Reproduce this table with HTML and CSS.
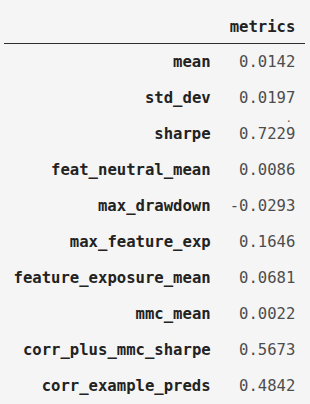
FILE: index.html
```html
<!DOCTYPE html>
<html>
<head>
<meta charset="utf-8">
<link rel="stylesheet" href="styles.css">
</head>
<body>
<table class="df">
  <thead>
    <tr><th class="blank"></th><th class="col">metrics</th></tr>
  </thead>
  <tbody>
    <tr><th>mean</th><td>0.0142</td></tr>
    <tr><th>std_dev</th><td class="dotted">0.0197<span class="dot">.</span></td></tr>
    <tr><th>sharpe</th><td>0.7229</td></tr>
    <tr><th>feat_neutral_mean</th><td>0.0086</td></tr>
    <tr><th>max_drawdown</th><td>-0.0293</td></tr>
    <tr><th>max_feature_exp</th><td>0.1646</td></tr>
    <tr><th>feature_exposure_mean</th><td>0.0681</td></tr>
    <tr><th>mmc_mean</th><td>0.0022</td></tr>
    <tr><th>corr_plus_mmc_sharpe</th><td>0.5673</td></tr>
    <tr><th>corr_example_preds</th><td>0.4842</td></tr>
  </tbody>
</table>
</body>
</html>
```
FILE: styles.css
```css
html, body {
  margin: 0;
  padding: 0;
  background: #f5f5f5;
}
body {
  padding: 7px 0 0 4px;
}
.df {
  border-collapse: collapse;
  font-family: "DejaVu Sans Mono", "Liberation Mono", monospace;
  font-size: 15.6px;
  line-height: 18px;
}
.df th, .df td {
  padding: 9px 9.5px 9.1px;
  text-align: right;
  white-space: nowrap;
  vertical-align: middle;
}
.df th {
  font-weight: bold;
  color: #222;
}
.df td {
  color: #4d4d4d;
}
.df thead tr {
  border-bottom: 1px solid #2e2e2e;
}
.df thead th {
  padding-top: 10.5px;
  padding-bottom: 7px;
}
.dotted {
  position: relative;
}
.dot {
  position: absolute;
  right: 13px;
  top: 37px;
  font-size: 10px;
  line-height: 4px;
  color: #555;
}
```
